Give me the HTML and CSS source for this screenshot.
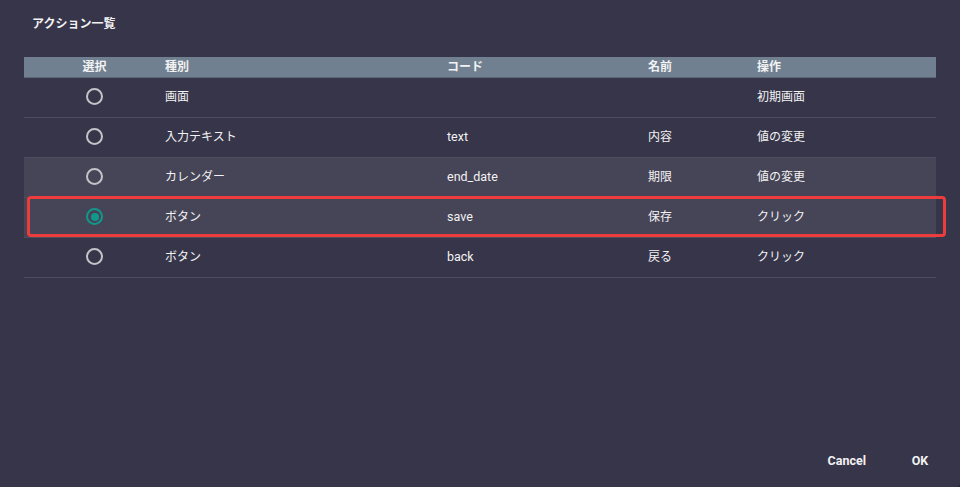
FILE: index.html
```html
<!DOCTYPE html>
<html lang="ja">
<head>
    <meta charset="UTF-8">
    <meta name="viewport" content="width=device-width, initial-scale=1.0">
    <title>アクション一覧</title>
    <link rel="stylesheet" href="styles.css">
</head>
<body>

    <div class="dialog">
        <h2 class="dialog-title">アクション一覧</h2>

        <div class="table-wrap">
            <table class="action-table">
                <thead>
                    <tr>
                        <th class="col-select">選択</th>
                        <th class="col-type">種別</th>
                        <th class="col-code">コード</th>
                        <th class="col-name">名前</th>
                        <th class="col-op">操作</th>
                    </tr>
                </thead>
                <tbody>
                    <tr>
                        <td class="col-select"><span class="radio"></span></td>
                        <td>画面</td>
                        <td class="code"></td>
                        <td></td>
                        <td>初期画面</td>
                    </tr>
                    <tr>
                        <td class="col-select"><span class="radio"></span></td>
                        <td>入力テキスト</td>
                        <td class="code">text</td>
                        <td>内容</td>
                        <td>値の変更</td>
                    </tr>
                    <tr class="row-hover">
                        <td class="col-select"><span class="radio"></span></td>
                        <td>カレンダー</td>
                        <td class="code">end_date</td>
                        <td>期限</td>
                        <td>値の変更</td>
                    </tr>
                    <tr class="row-selected">
                        <td class="col-select"><span class="radio checked"></span></td>
                        <td>ボタン</td>
                        <td class="code">save</td>
                        <td>保存</td>
                        <td>クリック</td>
                    </tr>
                    <tr>
                        <td class="col-select"><span class="radio"></span></td>
                        <td>ボタン</td>
                        <td class="code">back</td>
                        <td>戻る</td>
                        <td>クリック</td>
                    </tr>
                </tbody>
            </table>

            <!-- annotation box around the selected row -->
            <div class="highlight-box"></div>
        </div>

        <div class="dialog-actions">
            <button class="btn">Cancel</button>
            <button class="btn">OK</button>
        </div>
    </div>

</body>
</html>
```

FILE: styles.css
```css
/* General reset */
* {
    margin: 0;
    padding: 0;
    box-sizing: border-box;
}

body {
    font-family: Roboto, "Noto Sans CJK JP", sans-serif;
    background-color: #25232f;
    width: 960px;
    height: 487px;
    overflow: hidden;
}

/* Dialog */
.dialog {
    background-color: #37354a;
    width: 960px;
    height: 487px;
    border-radius: 0 0 4px 0;
    display: flex;
    flex-direction: column;
    color: #f2f2f2;
}

.dialog-title {
    font-size: 12px;
    font-weight: 700;
    line-height: 16px;
    padding: 16px 32px 0;
    height: 57px;
}

/* Table */
.table-wrap {
    position: relative;
    margin: 0 24px;
}

.action-table {
    width: 912px;
    border-collapse: collapse;
    table-layout: fixed;
    font-size: 12px;
}

.action-table th {
    background-color: #708090;
    font-weight: 700;
    font-size: 12px;
    text-align: left;
    height: 20px;
    line-height: 16px;
    padding-bottom: 0;
    border-bottom: 1px solid #5b6675;
}

.action-table td {
    height: 40px;
    line-height: 16px;
    padding-bottom: 1px;
    border-bottom: 1px solid #4e4c5d;
    vertical-align: middle;
}

.action-table td.code {
    font-size: 12.5px;
}

.action-table .col-select {
    width: 141px;
    text-align: center;
}

.action-table .col-type { width: 282px; }
.action-table .col-code { width: 201px; }
.action-table .col-name { width: 109px; }

.row-hover td,
.row-selected td {
    background-color: #464457;
}

/* Radio */
.radio {
    display: inline-block;
    width: 17px;
    height: 17px;
    border: 2px solid #c4c4c8;
    border-radius: 50%;
    vertical-align: middle;
    position: relative;
}

.radio.checked {
    border-color: #12988a;
}

.radio.checked::after {
    content: "";
    position: absolute;
    left: 2.5px;
    top: 2.5px;
    width: 8px;
    height: 8px;
    border-radius: 50%;
    background-color: #12988a;
}

/* Red annotation */
.highlight-box {
    position: absolute;
    left: 3px;
    top: 139px;
    width: 919px;
    height: 41px;
    border: 3px solid #ec3c3c;
    border-radius: 4px;
    pointer-events: none;
}

/* Actions */
.dialog-actions {
    margin-top: auto;
    display: flex;
    justify-content: flex-end;
    padding: 0 22px 13px;
}

.btn {
    background: none;
    border: none;
    color: #f2f2f2;
    font-family: Roboto, sans-serif;
    font-size: 12.5px;
    font-weight: 700;
    padding: 6px 8px;
    min-width: 36px;
    cursor: pointer;
}

.btn + .btn {
    margin-left: 28px;
}
```
